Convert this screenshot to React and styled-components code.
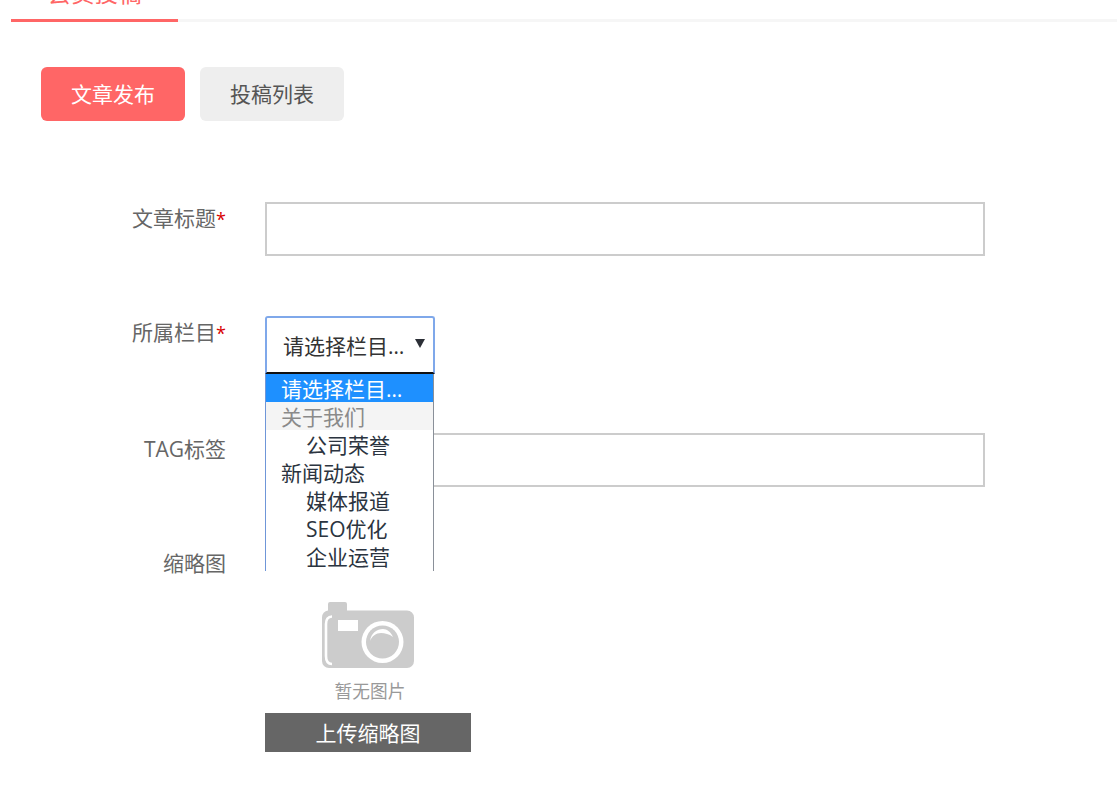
import React from "react";
import styled, { createGlobalStyle } from "styled-components";

const Global = createGlobalStyle`
  html, body { margin: 0; padding: 0; background: #fff; overflow: hidden; }
  body { font-family: "Open Sans", "Noto Sans CJK SC", sans-serif; color: #666; }
`;
const Page = styled.div`
  width: 1117px;
  height: 787px;
  overflow: hidden;
`;
const TabBar = styled.div`
  margin: -21px 0 0 11px;
  display: flex;
  border-bottom: 3px solid #f6f6f6;
  height: 40px;
`;
const Tab = styled.div`
  width: 167px;
  height: 40px;
  box-sizing: content-box;
  border-bottom: 3px solid #ff6666;
  color: #ff6666;
  font-size: 23.5px;
  line-height: 28px;
  text-align: center;
`;
const Actions = styled.div`
  display: flex;
  gap: 15px;
  margin: 45px 0 0 41px;
`;
const ActionButton = styled.div`
  width: 144px;
  height: 54px;
  border-radius: 6px;
  background: ${(p) => (p.$active ? "#ff6666" : "#eeeeee")};
  color: ${(p) => (p.$active ? "#fff" : "#555")};
  font-size: 21px;
  line-height: 54px;
  text-align: center;
`;
const Form = styled.div`
  margin-top: 81px;
`;
const Row = styled.div`
  display: flex;
  align-items: flex-start;
  margin-bottom: ${(p) => p.$gap}px;
`;
const Label = styled.div`
  width: 226px;
  text-align: right;
  font-size: 21px;
  line-height: 32px;
  color: #666;
  flex: none;
`;
const Star = styled.span`
  color: #d80000;
  font-size: 18px;
`;
const Field = styled.div`
  margin-left: 39px;
  position: relative;
`;
const TextInput = styled.div`
  width: 720px;
  height: 54px;
  box-sizing: border-box;
  border: 2px solid #cccccc;
  background: #fff;
`;
const SelectBox = styled.div`
  width: 170px;
  height: 58px;
  box-sizing: border-box;
  border: 2px solid #7fa8ea;
  border-bottom: 2px solid #111;
  border-radius: 3px 3px 0 0;
  background: #fff;
  color: #333;
  font-size: 21px;
  line-height: 56px;
  padding-left: 16px;
  position: relative;
`;
const Arrow = styled.span`
  position: absolute;
  left: 148px;
  top: 21px;
  width: 0;
  height: 0;
  border-left: 5px solid transparent;
  border-right: 5px solid transparent;
  border-top: 9px solid #2b2f36;
`;
const Dropdown = styled.div`
  position: absolute;
  left: 0;
  top: 58px;
  width: 169px;
  height: 197px;
  box-sizing: border-box;
  border-left: 1px solid #6f96d8;
  border-right: 1px solid #8a9099;
  background: #fff;
  overflow: hidden;
  z-index: 2;
`;
const Option = styled.div`
  height: 28px;
  line-height: 30px;
  font-size: 21px;
  white-space: nowrap;
  padding-left: ${(p) => (p.$child ? 40 : 15)}px;
  color: ${(p) => (p.$selected ? "#fff" : p.$disabled ? "#8a8a8a" : "#2b3440")};
  background: ${(p) => (p.$selected ? "#1e90ff" : p.$disabled ? "#f4f4f4" : "#fff")};
`;
const Thumb = styled.div`
  width: 206px;
  margin-top: 54px;
`;
const Placeholder = styled.div`
  display: flex;
  flex-direction: column;
  align-items: center;
  height: 112px;
`;
const Caption = styled.div`
  font-size: 17.7px;
  line-height: 22px;
  margin-top: 11px;
  margin-left: 4px;
  color: #999;
`;
const UploadButton = styled.div`
  height: 39px;
  background: #666;
  color: #fff;
  font-size: 21px;
  line-height: 40px;
  text-align: center;
`;

const CameraIcon = () => (
  <svg width="94" height="68" viewBox="0 0 94 68" style={{ display: "block" }}>
    <path
      fill="#cccccc"
      d="M7 9.5V3a2 2 0 0 1 2-2h15a2 2 0 0 1 2 2v6.5h60a7 7 0 0 1 7 7V60a7 7 0 0 1-7 7H8a7 7 0 0 1-7-7V16.5a7 7 0 0 1 6-7z"
    />
    <path d="M11 15.5C7 15.5 5 18.5 5 23V55C5 60 7 63 11 63" fill="none" stroke="#fff" strokeWidth="2.6" />
    <rect x="17" y="19" width="20" height="11" fill="#fff" />
    <circle cx="61.5" cy="41" r="21" fill="#fff" />
    <circle cx="61.5" cy="41" r="16.5" fill="#cccccc" />
    <path d="M49 40C50 32 56 28 62 28C66 28 70 31 72 36C68 33 64 32 60 32C55 32 51 35 49 40Z" fill="#fff" />
  </svg>
);

export default function App() {
  return (
    <Page>
      <Global />
      <TabBar>
        <Tab>会员投稿</Tab>
      </TabBar>
      <Actions>
        <ActionButton $active>文章发布</ActionButton>
        <ActionButton>投稿列表</ActionButton>
      </Actions>
      <Form>
        <Row $gap={60}>
          <Label>文章标题<Star>*</Star></Label>
          <Field><TextInput /></Field>
        </Row>
        <Row $gap={59}>
          <Label>所属栏目<Star>*</Star></Label>
          <Field>
            <SelectBox>
              请选择栏目…
              <Arrow />
            </SelectBox>
            <Dropdown>
              <Option $selected>请选择栏目…</Option>
              <Option $disabled>关于我们</Option>
              <Option $child>公司荣誉</Option>
              <Option>新闻动态</Option>
              <Option $child>媒体报道</Option>
              <Option $child>SEO优化</Option>
              <Option $child>企业运营</Option>
            </Dropdown>
          </Field>
        </Row>
        <Row $gap={60}>
          <Label>TAG标签</Label>
          <Field><TextInput /></Field>
        </Row>
        <Row $gap={0}>
          <Label>缩略图</Label>
          <Field>
            <Thumb>
              <Placeholder>
                <CameraIcon />
                <Caption>暂无图片</Caption>
              </Placeholder>
              <UploadButton>上传缩略图</UploadButton>
            </Thumb>
          </Field>
        </Row>
      </Form>
    </Page>
  );
}
